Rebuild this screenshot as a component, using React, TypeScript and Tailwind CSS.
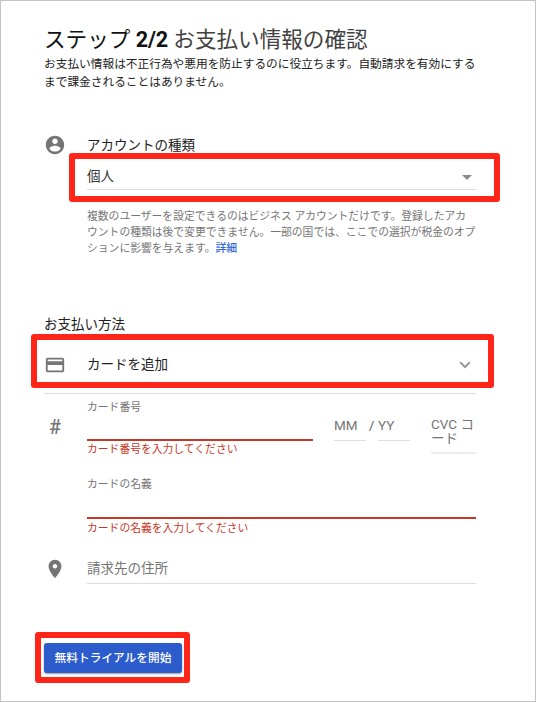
import type { ReactNode } from 'react';

const fontStack = "font-[Roboto,'Noto_Sans_CJK_JP',sans-serif]";

function Highlight({ className }: { className: string }) {
  return (
    <div
      aria-hidden="true"
      className={`pointer-events-none absolute rounded-[3px] border-6 border-[#ff2619] ${className}`}
    />
  );
}

function Row({ icon, className, children }: { icon?: ReactNode; className: string; children: ReactNode }) {
  return (
    <div className={`flex ${className}`}>
      <div className="w-[43px] shrink-0">{icon}</div>
      <div className="min-w-0 flex-1">{children}</div>
    </div>
  );
}

function AccountIcon() {
  return (
    <svg viewBox="0 0 24 24" className="block size-[22px] fill-[#757575]">
      <path d="M12 2C6.48 2 2 6.48 2 12s4.48 10 10 10 10-4.48 10-10S17.52 2 12 2zm0 3c1.66 0 3 1.34 3 3s-1.34 3-3 3-3-1.34-3-3 1.34-3 3-3zm0 14.2c-2.5 0-4.71-1.28-6-3.22.03-1.99 4-3.08 6-3.08 1.99 0 5.97 1.09 6 3.08-1.29 1.94-3.5 3.22-6 3.22z" />
    </svg>
  );
}

function CardIcon() {
  return (
    <svg viewBox="0 0 24 24" className="block size-[22px] fill-[#757575]">
      <path d="M20 4H4c-1.11 0-1.99.89-1.99 2L2 18c0 1.11.89 2 2 2h16c1.11 0 2-.89 2-2V6c0-1.11-.89-2-2-2zm0 14H4v-6h16v6zm0-10H4V6h16v2z" />
    </svg>
  );
}

function PinIcon() {
  return (
    <svg viewBox="0 0 24 24" className="block size-[22px] fill-[#757575]">
      <path d="M12 2C8.13 2 5 5.13 5 9c0 5.25 7 13 7 13s7-7.75 7-13c0-3.87-3.13-7-7-7zm0 9.5c-1.38 0-2.5-1.12-2.5-2.5s1.12-2.5 2.5-2.5 2.5 1.12 2.5 2.5-1.12 2.5-2.5 2.5z" />
    </svg>
  );
}

export default function App() {
  return (
    <main
      lang="ja"
      className={`h-[702px] w-[536px] overflow-hidden border border-[#c4c4c4] bg-white pt-[25px] pr-[59px] pl-[43px] whitespace-nowrap text-[#212121] ${fontStack}`}
    >
      <h1 className="h-7 text-[21.6px] leading-7 text-[#424242]">
        <span className="text-[#111]">
          ステップ <span className="font-bold tracking-[-0.2px]">2/2</span>
        </span>{' '}
        お支払い情報の確認
      </h1>
      <p className="mt-px h-[35px] text-[11.7px] leading-[18px]">
        お支払い情報は不正行為や悪用を防止するのに役立ちます。自動請求を有効にする
        <br />
        まで課金されることはありません。
      </p>

      <Row className="mt-11" icon={<AccountIcon />}>
        <h2 className="h-[22px] text-[13.5px] leading-[22px]">アカウントの種類</h2>
        <div className="relative flex h-[34px] items-center justify-between border-b border-[#dcdcdc] pt-[7px] pr-1">
          <span className="text-[13.5px] leading-5 text-[#333]">個人</span>
          <svg viewBox="0 0 10 5" className="mt-0.5 h-[5px] w-[10px] fill-[#8a8a8a]">
            <path d="M0 0h10L5 5z" />
          </svg>
          <Highlight className="-top-[3px] -right-6 -left-[18px] h-[49px]" />
        </div>
        <p className="mt-[19px] h-12 text-[10.8px] leading-4 text-[#757575]">
          複数のユーザーを設定できるのはビジネス アカウントだけです。登録したアカ
          <br />
          ウントの種類は後で変更できません。一部の国では、ここでの選択が税金のオプ
          <br />
          ションに影響を与えます。<a className="font-medium text-[#3367d6]">詳細</a>
        </p>
      </Row>

      <h2 className="mt-[57px] h-5 text-[13.5px] leading-5">お支払い方法</h2>
      <div className="relative h-[60px] border-b border-[#dedede] pt-5">
        <Row className="h-[22px]" icon={<CardIcon />}>
          <div className="flex items-center justify-between pr-[5px]">
            <span className="text-[13.5px] leading-5">カードを追加</span>
            <svg viewBox="0 0 12 8" className="mt-px h-2 w-3 fill-none stroke-[#999] stroke-2">
              <path d="M1.2 1.3 6 6l4.8-4.7" />
            </svg>
          </div>
        </Row>
        <Highlight className="top-0 -right-[18px] -left-[13px] h-[54px]" />
      </div>

      <Row
        className="mt-1.5"
        icon={<div className="w-[22px] pt-[15px] text-center text-[20px] leading-6 font-medium text-[#757575]">#</div>}
      >
        <div className="flex">
          <div className="w-[226px]">
            <div className="h-[41px] border-b-2 border-[#c53929] text-[10.8px] leading-4 text-[#757575]">カード番号</div>
            <p className="text-[10.8px] leading-[18px] text-[#c53929]">カード番号を入力してください</p>
          </div>
          <div className="ml-[21px] flex pt-[17px] text-[13.5px] leading-[17px] text-[#757575]">
            <div className="h-6 w-8 border-b border-[#dedede]">MM</div>
            <span className="w-3 pl-[3px] font-medium">/</span>
            <div className="h-6 w-8 border-b border-[#dedede]">YY</div>
          </div>
          <div className="mt-[18px] ml-[21px] h-9 w-[45px] border-b-2 border-[#ececec] text-[13.5px] leading-[13.5px] text-[#757575]">
            CVC コ<br />ード
          </div>
        </div>
        <div className="mt-[18px] h-[42px] border-b-2 border-[#c53929] text-[10.8px] leading-4 text-[#757575]">
          カードの名義
        </div>
        <p className="pt-px text-[10.8px] leading-[18px] text-[#c53929]">カードの名義を入力してください</p>
      </Row>

      <Row className="mt-5" icon={<PinIcon />}>
        <div className="h-[26px] border-b border-[#dedede] text-[13.5px] leading-5 text-[#757575]">請求先の住所</div>
      </Row>

      <div className="relative mt-[59px] w-[138px]">
        <button className="block h-[30px] w-full rounded-[3px] bg-[#2c5ccb] text-[11.7px] leading-[30px] font-medium text-white shadow-[0_1px_2px_rgba(0,0,0,0.4)]">
          無料トライアルを開始
        </button>
        <Highlight className="-top-[11px] -right-2 -left-[9px] h-[51px]" />
      </div>
    </main>
  );
}
